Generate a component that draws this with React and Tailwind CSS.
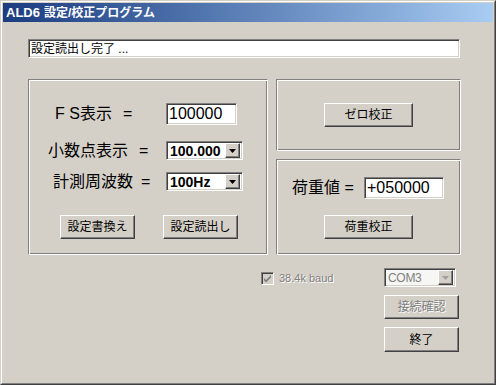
import React from 'react';

// Win2000-style bevels
const raised = 'border border-t-white border-l-white border-b-[#404040] border-r-[#404040] shadow-[inset_-1px_-1px_0_#808080] bg-[#d4d0c8]';
const sunken = 'border border-t-[#808080] border-l-[#808080] border-b-white border-r-white shadow-[inset_1px_1px_0_#404040,inset_-1px_-1px_0_#d4d0c8]';
const etched = 'border border-t-[#808080] border-l-[#808080] border-b-white border-r-white shadow-[inset_1px_1px_0_#fff,inset_-1px_-1px_0_#808080]';

const Button = ({ children, disabled, className = '' }) => (
  <div className={`${raised} flex items-center justify-center text-[12px] leading-none ${disabled ? 'text-[#808080] [text-shadow:1px_1px_0_#fff]' : 'text-black'} ${className}`}>
    {children}
  </div>
);

const Arrow = ({ color = '#000' }) => (
  <svg width="7" height="4" viewBox="0 0 7 4">
    <path d="M0 0h7L3.5 4z" fill={color} />
  </svg>
);

const Combo = ({ value, disabled, className = '', textClass = '' }) => (
  <div className={`${sunken} ${disabled ? 'bg-[#f6f6f4]' : 'bg-white'} flex items-center pl-[3px] pr-[2px] ${className}`}>
    <span className={`flex-1 leading-none ${textClass}`}>{value}</span>
    <div className={`${raised} w-[15px] h-[15px] flex items-center justify-center`}>
      <Arrow color={disabled ? '#a0a0a0' : '#000'} />
    </div>
  </div>
);

const Label = ({ text, pad, eqGap }) => (
  <div className={`w-[137px] flex items-center text-[16px] leading-none ${pad}`}>
    <span>{text}</span>
    <span className={eqGap}>=</span>
  </div>
);

export default function App() {
  return (
    <div className="w-[496px] h-[385px] bg-[#d4d0c8] font-['Liberation_Sans','Noto_Sans_CJK_JP',sans-serif] text-black">
      <div className="w-full h-full border border-t-[#d4d0c8] border-l-[#d4d0c8] border-b-[#404040] border-r-[#404040]">
        <div className="w-full h-full border border-t-white border-l-white border-b-[#808080] border-r-[#808080] p-px flex flex-col">
          {/* title bar */}
          <div className="h-[19px] bg-gradient-to-r from-[#1c3c80] to-[#a8ccf2] flex items-center pl-[3px] text-white font-bold leading-none">
            <span className="text-[13px]">ALD6</span>
            <span className="text-[12px] ml-[4px]">設定/校正プログラム</span>
          </div>

          <div className="flex-1 flex flex-col pl-[25px]">
            {/* status */}
            <div className={`${sunken} bg-white w-[432px] h-[19px] mt-[17px] flex items-center pl-[2px] text-[12px] leading-none`}>
              設定読出し完了 ...
            </div>

            <div className="flex gap-[8px] mt-[21px]">
              {/* settings group */}
              <div className={`${etched} w-[240px] h-[176px] flex flex-col pt-[23px]`}>
                <div className="flex items-center h-[22px]">
                  <Label text="F S表示" pad="pl-[26px]" eqGap="ml-[11px]" />
                  <div className={`${sunken} bg-white w-[71px] h-[22px] flex items-center pl-[2px] text-[16px] leading-none`}>100000</div>
                </div>
                <div className="flex items-center h-[19px] mt-[16px]">
                  <Label text="小数点表示" pad="pl-[19px]" eqGap="ml-[11px]" />
                  <Combo value="100.000" className="w-[77px] h-[19px]" textClass="text-[14px] font-bold" />
                </div>
                <div className="flex items-center h-[19px] mt-[12px]">
                  <Label text="計測周波数" pad="pl-[24px]" eqGap="ml-[8px]" />
                  <Combo value="100Hz" className="w-[77px] h-[19px]" textClass="text-[14px] font-bold" />
                </div>
                <div className="flex gap-[28px] pl-[31px] mt-[24px]">
                  <Button className="w-[75px] h-[24px]">設定書換え</Button>
                  <Button className="w-[75px] h-[24px]">設定読出し</Button>
                </div>
              </div>

              <div className="flex flex-col gap-[8px]">
                {/* zero */}
                <div className={`${etched} w-[185px] h-[72px] flex items-center justify-center`}>
                  <Button className="w-[89px] h-[24px]">ゼロ校正</Button>
                </div>
                {/* load */}
                <div className={`${etched} w-[185px] h-[96px] flex flex-col pt-[17px]`}>
                  <div className="flex items-center h-[22px] pl-[15px]">
                    <span className="text-[16px] leading-none w-[72px]">荷重値 =</span>
                    <div className={`${sunken} bg-white w-[80px] h-[22px] flex items-center pl-[2px] text-[16px] leading-none`}>+050000</div>
                  </div>
                  <div className="flex justify-center mt-[16px]">
                    <Button className="w-[89px] h-[24px]">荷重校正</Button>
                  </div>
                </div>
              </div>
            </div>

            {/* bottom controls */}
            <div className="flex">
              <div className="w-[356px] pt-[17px] pl-[233px]">
                <div className="flex items-center gap-[5px] h-[13px]">
                  <div className={`${sunken} w-[13px] h-[13px] bg-[#d4d0c8] flex items-center justify-center`}>
                    <svg width="9" height="9" viewBox="0 0 9 9">
                      <path d="M1 4l2 2 5-5v2.5l-5 5-2-2z" fill="#808080" />
                    </svg>
                  </div>
                  <span className="text-[11px] leading-none text-[#808080] [text-shadow:1px_1px_0_#fff]">38.4k baud</span>
                </div>
              </div>
              <div className="flex flex-col">
                <Combo value="COM3" disabled className="w-[72px] h-[19px] mt-[13px]" textClass="text-[12px] tracking-[-0.3px] text-[#808080]" />
                <Button disabled className="w-[75px] h-[24px] mt-[8px]">接続確認</Button>
                <Button className="w-[75px] h-[25px] mt-[8px]">終了</Button>
              </div>
            </div>
          </div>
        </div>
      </div>
    </div>
  );
}
